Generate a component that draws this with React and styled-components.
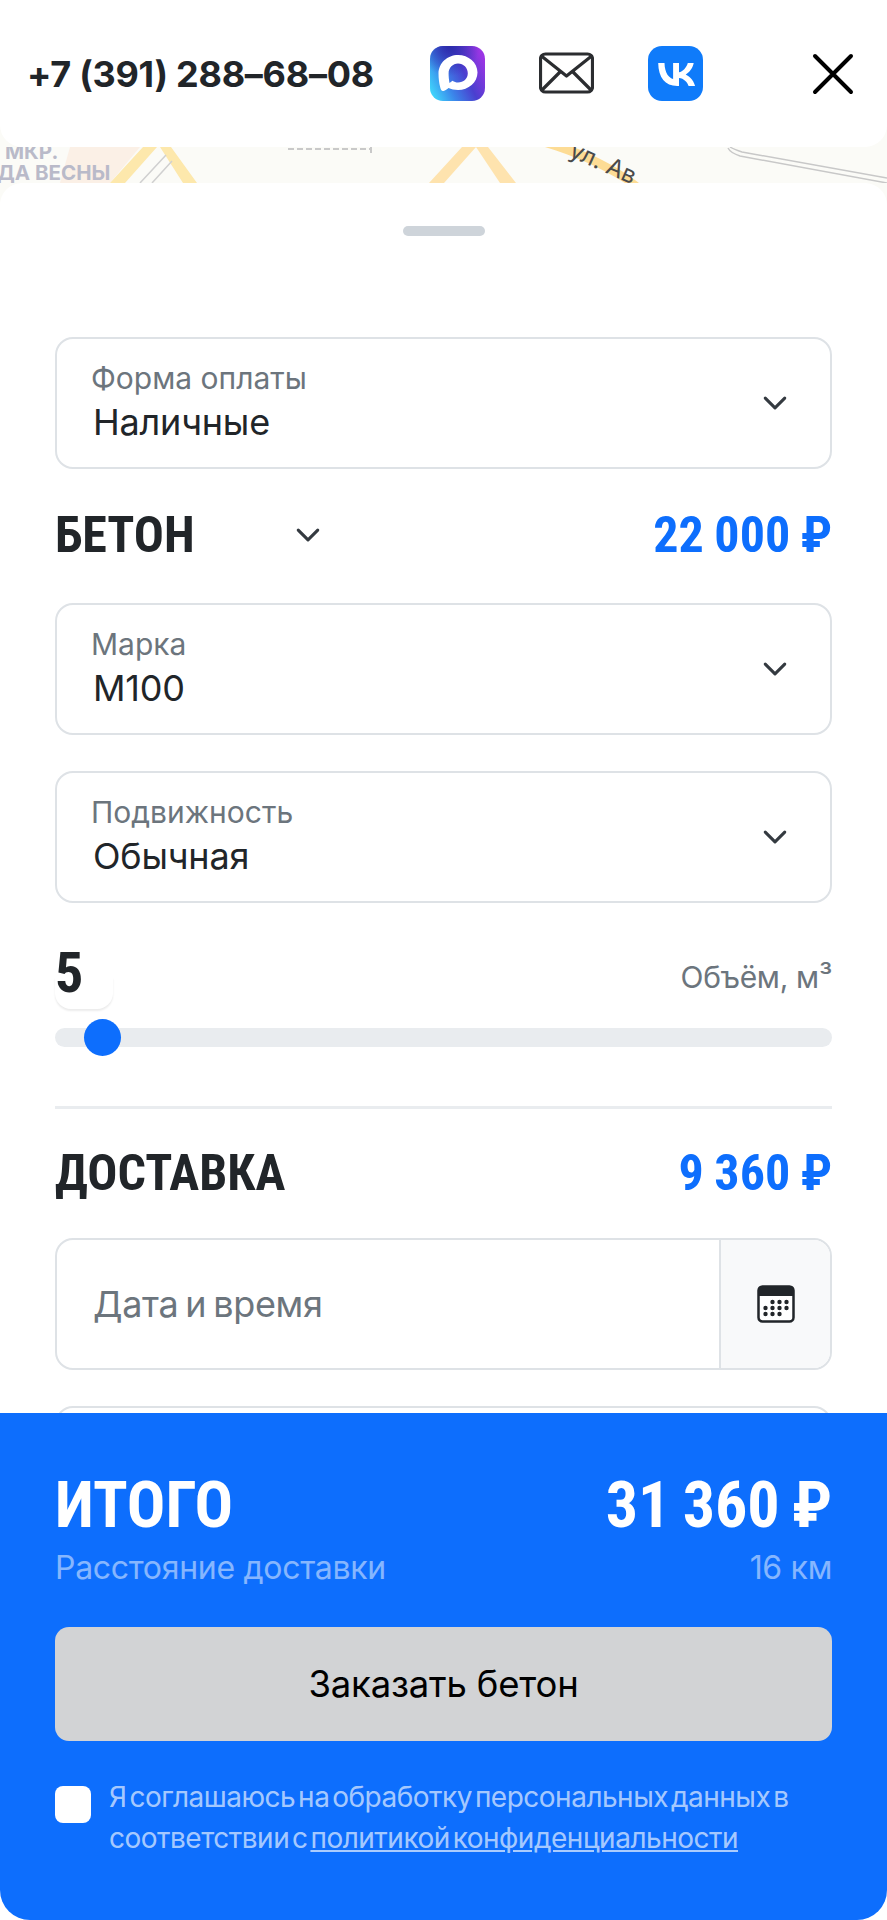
import React from 'react';
import styled, { createGlobalStyle } from 'styled-components';

const Global = createGlobalStyle`
  html, body { margin: 0; padding: 0; background: #fff; }
  * { box-sizing: border-box; }
`;
const sans = `Inter, "Noto Sans", sans-serif`;
const cond = `Roboto, sans-serif`;

const Page = styled.div`
  position: relative; width: 887px; height: 1920px; overflow: hidden;
  background: #fbfbf7; font-family: ${sans}; color: #212529;
`;
const Header = styled.header`
  height: 147px; background: #fff; border-radius: 0 0 22px 22px;
  padding: 0 33px 0 27px; display: flex; align-items: center;
`;
const Phone = styled.a`
  font-size: 36px; font-weight: 700; width: 403px; white-space: nowrap; letter-spacing: -0.25px;
`;
const Contacts = styled.nav`display: flex; align-items: center; gap: 54px;`;
const IconBox = styled.span`display: block; width: 55px; height: 55px;`;
const Close = styled.span`display: block; width: 42px; height: 42px; margin-left: auto;`;
const MapStrip = styled.svg`display: block; width: 887px; height: 36px;`;
const Sheet = styled.main`
  background: #fff; border-radius: 22px 22px 0 0; height: 1800px; padding: 43px 55px 0;
  display: flex; flex-direction: column;
`;
const Handle = styled.div`
  flex: none; width: 82px; height: 10px; border-radius: 5px; background: #ced4da; align-self: center; margin-bottom: 101px;
`;
const Field = styled.div`
  flex: none; height: 132px; border: 2px solid #dee2e6; border-radius: 18px; background: #fff;
  display: flex; align-items: center; justify-content: space-between;
  padding: 0 42px 0 34px; margin-bottom: ${p => p.$mb}px;
`;
const FieldText = styled.div`display: flex; flex-direction: column; gap: 2px; padding-bottom: 4px;`;
const FieldLabel = styled.span`font-size: 30px; line-height: 40px; color: #6c757d;`;
const FieldValue = styled.span`font-size: 36px; line-height: 44px; color: #212529; margin-left: 2px; letter-spacing: -0.2px;`;
const Section = styled.div`
  flex: none; display: flex; align-items: center; justify-content: space-between; height: ${p => p.$h}px; margin-bottom: ${p => p.$mb}px;
`;
const Title = styled.h2`
  margin: 0; font-family: ${cond}; font-stretch: 75%; font-weight: 700; font-size: 50px; line-height: 1; color: #212529;
`;
const TitleRow = styled.div`display: flex; align-items: center; gap: 100px;`;
const Price = styled.span`
  font-family: ${cond}; font-stretch: 75%; font-weight: 700; font-size: 50px; line-height: 1; color: #0d6efd; word-spacing: -1px;
`;
const VolumeRow = styled.div`
  flex: none; position: relative; display: flex; align-items: flex-end; justify-content: space-between; height: 56px; margin-bottom: 27px;
`;
const VolumeNum = styled.span`
  font-family: ${cond}; font-stretch: 75%; font-weight: 700; font-size: 56px; line-height: 56px; position: relative; z-index: 1;
`;
const VolumeBubble = styled.span`
  position: absolute; left: 0; top: 32px; width: 58px; height: 32px; background: #fff;
  border-radius: 0 0 16px 16px; box-shadow: 0 2px 2px rgba(0,0,0,.08);
`;
const VolumeLabel = styled.span`font-size: 30px; color: #6c757d; line-height: 48px; letter-spacing: -0.3px;`;
const Track = styled.div`
  flex: none; position: relative; height: 19px; border-radius: 10px; background: #e9ecef; margin-bottom: 59px;
`;
const Thumb = styled.span`
  position: absolute; left: 29px; top: -9px; width: 37px; height: 37px; border-radius: 50%; background: #0d6efd;
`;
const Divider = styled.hr`flex: none; width: 100%; margin: 0 0 36px; border: 0; height: 3px; background: #e9ecef;`;
const InputGroup = styled.div`
  flex: none; height: 132px; display: flex; border: 2px solid #dee2e6; border-radius: 18px; overflow: hidden; margin-bottom: 36px;
`;
const Placeholder = styled.div`
  flex: 1; display: flex; align-items: center; padding-left: 36px; font-size: 36px; color: #6c757d; letter-spacing: -0.3px; word-spacing: -3px;
`;
const Addon = styled.div`
  width: 111px; background: #f8f9fa; border-left: 2px solid #dee2e6; display: flex; align-items: center; justify-content: center;
`;
const EmptyField = styled.div`flex: none; height: 132px; border: 2px solid #dee2e6; border-radius: 18px;`;
const Footer = styled.footer`
  position: absolute; left: 0; right: 0; bottom: 0; height: 507px; background: #0d6efd; color: #fff;
  border-radius: 0 0 30px 30px; padding: 61px 55px 0;
`;
const TotalRow = styled.div`display: flex; justify-content: space-between; align-items: center; height: 64px;`;
const TotalText = styled.span`font-family: ${cond}; font-stretch: 75%; font-weight: 700; font-size: 64px; line-height: 1; word-spacing: -2.5px;`;
const DistRow = styled.div`
  display: flex; justify-content: space-between; font-size: 32px; line-height: 44px; margin-top: 8px; color: rgba(255,255,255,.5); letter-spacing: -0.3px;
`;
const OrderButton = styled.button`
  display: block; width: 100%; height: 114px; margin-top: 37px; border: 0; border-radius: 14px; background: #d2d3d5;
  color: #000; font-family: ${sans}; font-size: 36.5px; letter-spacing: -0.2px;
`;
const Consent = styled.label`display: flex; gap: 18px; margin-top: 44px;`;
const CheckBox = styled.span`
  flex: none; width: 36px; height: 37px; border-radius: 8px; background: #fff; margin-top: 1px;
`;
const ConsentText = styled.span`
  font-size: 28px; line-height: 41px; color: rgba(255,255,255,.65); letter-spacing: -0.5px; word-spacing: -4.5px; margin-top: -8px;
`;
const ConsentLink = styled.a`color: inherit; text-decoration: underline;`;

const Chevron = () => (
  <svg width="26" height="26" viewBox="0 0 16 16" fill="none" stroke="#343a40" strokeWidth="1.9" strokeLinecap="round" strokeLinejoin="round">
    <path d="M2 5l6 6 6-6" />
  </svg>
);

export default function App() {
  return (
    <Page>
      <Global />
      <Header>
        <Phone>+7 (391) 288–68–08</Phone>
        <Contacts>
          <IconBox>
            <svg viewBox="0 0 55 55" width="55" height="55">
              <defs>
                <linearGradient id="mx" x1="0" y1="0.8" x2="1" y2="0.3">
                  <stop offset="0" stopColor="#3fd4fb" /><stop offset=".3" stopColor="#3b86ea" /><stop offset=".62" stopColor="#4a3fcf" /><stop offset="1" stopColor="#9a35e4" />
                </linearGradient>
                <radialGradient id="mt" cx="0.35" cy="0" r="0.55">
                  <stop offset="0" stopColor="#2a2aa8" stopOpacity=".95" /><stop offset="1" stopColor="#2a2aa8" stopOpacity="0" />
                </radialGradient>
              </defs>
              <rect width="55" height="55" rx="13" fill="url(#mx)" />
              <rect width="55" height="55" rx="13" fill="url(#mt)" />
              <path fillRule="evenodd" fill="#fff" d="M28 9C17.5 9 8.500 17 8.500 27.500c0 5 .7 9.500 1.500 13 .6 2.500 1.500 5 3.500 4.500 1.800-.4 3.500-1.700 5-3 2.500 1.300 6 2 9.500 2 10.500 0 19.500-7.500 19.500-17.500S38.500 9 28 9Zm0 8.500c5.500 0 9.800 4.300 9.800 9.700S33.500 36.500 28 36.500c-2 0-3.800-.6-5.500-1.800l-3 2.200c-.5-3-.9-6-.9-9.500 0-5.700 4.300-9.900 9.400-9.900Z" />
            </svg>
          </IconBox>
          <IconBox>
            <svg viewBox="0 0 55 55" width="55" height="55" fill="none" stroke="#2b2d30" strokeWidth="3.200" strokeLinecap="round" strokeLinejoin="round">
              <rect x="1.500" y="8" width="52" height="38" rx="5" />
              <path d="M3 10.500 27.500 30 52 10.500M3 44l18-18M52 44 34 26" />
            </svg>
          </IconBox>
          <IconBox>
            <svg viewBox="0 0 55 55" width="55" height="55">
              <rect width="55" height="55" rx="14" fill="#0f7bfa" />
              <path fill="#fff" d="M29.300 40C17 40 10.500 31.500 10.200 17h6.300c.2 10.600 4.900 15.100 8.600 16V17h5.900v9.200c3.700-.4 7.500-4.600 8.800-9.200h5.900c-1 5.700-5.100 9.900-8 11.600 2.900 1.400 7.600 5 9.400 11.400h-6.500c-1.400-4.300-4.800-7.600-9.600-8.100V40h-.7Z" />
            </svg>
          </IconBox>
        </Contacts>
        <Close>
          <svg viewBox="0 0 42 42" width="42" height="42" stroke="#000" strokeWidth="4" strokeLinecap="round">
            <path d="M3 3l36 36M39 3 3 39" />
          </svg>
        </Close>
      </Header>
      <MapStrip viewBox="0 0 887 36">
        <rect width="887" height="36" fill="#fbfbf7" />
        <path d="M70 0h70l-30 36H60Z" fill="#fbf0e6" />
        <path d="M110 36 143 0h14l-32 36ZM160 0h11l26 36h-14Z" fill="#fde8ac" />
        <path d="M140 36 166 8M152 36l20-22" stroke="#d0d0d0" strokeWidth="1.500" fill="none" />
        <path d="M429 36 462 0h14l-32 36ZM476 0h12l28 36h-16Z" fill="#fee3ae" />
        <path d="M545 0h28c24 9 48 22 66 36h-14C600 20 575 9 545 0Z" fill="#fddc95" />
        <path d="M728 1c2 4 6 6 12 8l147 27M730 0c3 2 6 3 12 5l145 26" stroke="#c8c8c8" strokeWidth="1.500" fill="none" />
        <path d="M288 2h82M371 0v6" stroke="#c9c9c9" strokeWidth="2" strokeDasharray="6 3" fill="none" />
        <text x="5" y="12" fontFamily="Inter, sans-serif" fontWeight="700" fontSize="20.500" fill="#b9bac9">МКР.</text>
        <text x="-3" y="33" fontFamily="Inter, sans-serif" fontWeight="700" fontSize="20.500" fill="#b9bac9">ДА ВЕСНЫ</text>
        <text x="568" y="9" transform="rotate(24 568 9)" fontFamily="Inter, sans-serif" fontSize="24" fill="#4a4a4a">ул. Ав</text>
      </MapStrip>
      <Sheet>
        <Handle />
        <Field $mb={37}>
          <FieldText><FieldLabel>Форма оплаты</FieldLabel><FieldValue>Наличные</FieldValue></FieldText>
          <Chevron />
        </Field>
        <Section $h={58} $mb={39}>
          <TitleRow><Title>БЕТОН</Title><Chevron /></TitleRow>
          <Price>22 000 ₽</Price>
        </Section>
        <Field $mb={36}>
          <FieldText><FieldLabel>Марка</FieldLabel><FieldValue>М100</FieldValue></FieldText>
          <Chevron />
        </Field>
        <Field $mb={42}>
          <FieldText><FieldLabel>Подвижность</FieldLabel><FieldValue>Обычная</FieldValue></FieldText>
          <Chevron />
        </Field>
        <VolumeRow>
          <VolumeBubble />
          <VolumeNum>5</VolumeNum>
          <VolumeLabel>Объём, м³</VolumeLabel>
        </VolumeRow>
        <Track><Thumb /></Track>
        <Divider />
        <Section $h={56} $mb={37}>
          <Title>ДОСТАВКА</Title>
          <Price>9 360 ₽</Price>
        </Section>
        <InputGroup>
          <Placeholder>Дата и время</Placeholder>
          <Addon>
            <svg width="38" height="38" viewBox="0 0 38 38">
              <rect x="1.500" y="1.500" width="35" height="35" rx="4" fill="#fff" stroke="#212529" strokeWidth="2.500" />
              <path d="M1 11V5a4 4 0 0 1 4-4h28a4 4 0 0 1 4 4v6Z" fill="#212529" />
              {[[14,17],[21,17],[28,17],[7,23],[14,23],[21,23],[28,23],[7,29],[14,29],[21,29]].map(([x,y]) => (
                <circle key={`${x}-${y}`} cx={x+1.500} cy={y} r="2.200" fill="#212529" />
              ))}
            </svg>
          </Addon>
        </InputGroup>
        <EmptyField />
      </Sheet>
      <Footer>
        <TotalRow><TotalText>ИТОГО</TotalText><TotalText>31 360 ₽</TotalText></TotalRow>
        <DistRow><span>Расстояние доставки</span><span>16 км</span></DistRow>
        <OrderButton>Заказать бетон</OrderButton>
        <Consent>
          <CheckBox />
          <ConsentText>Я соглашаюсь на обработку персональных данных в соответствии с <ConsentLink>политикой конфиденциальности</ConsentLink></ConsentText>
        </Consent>
      </Footer>
    </Page>
  );
}
